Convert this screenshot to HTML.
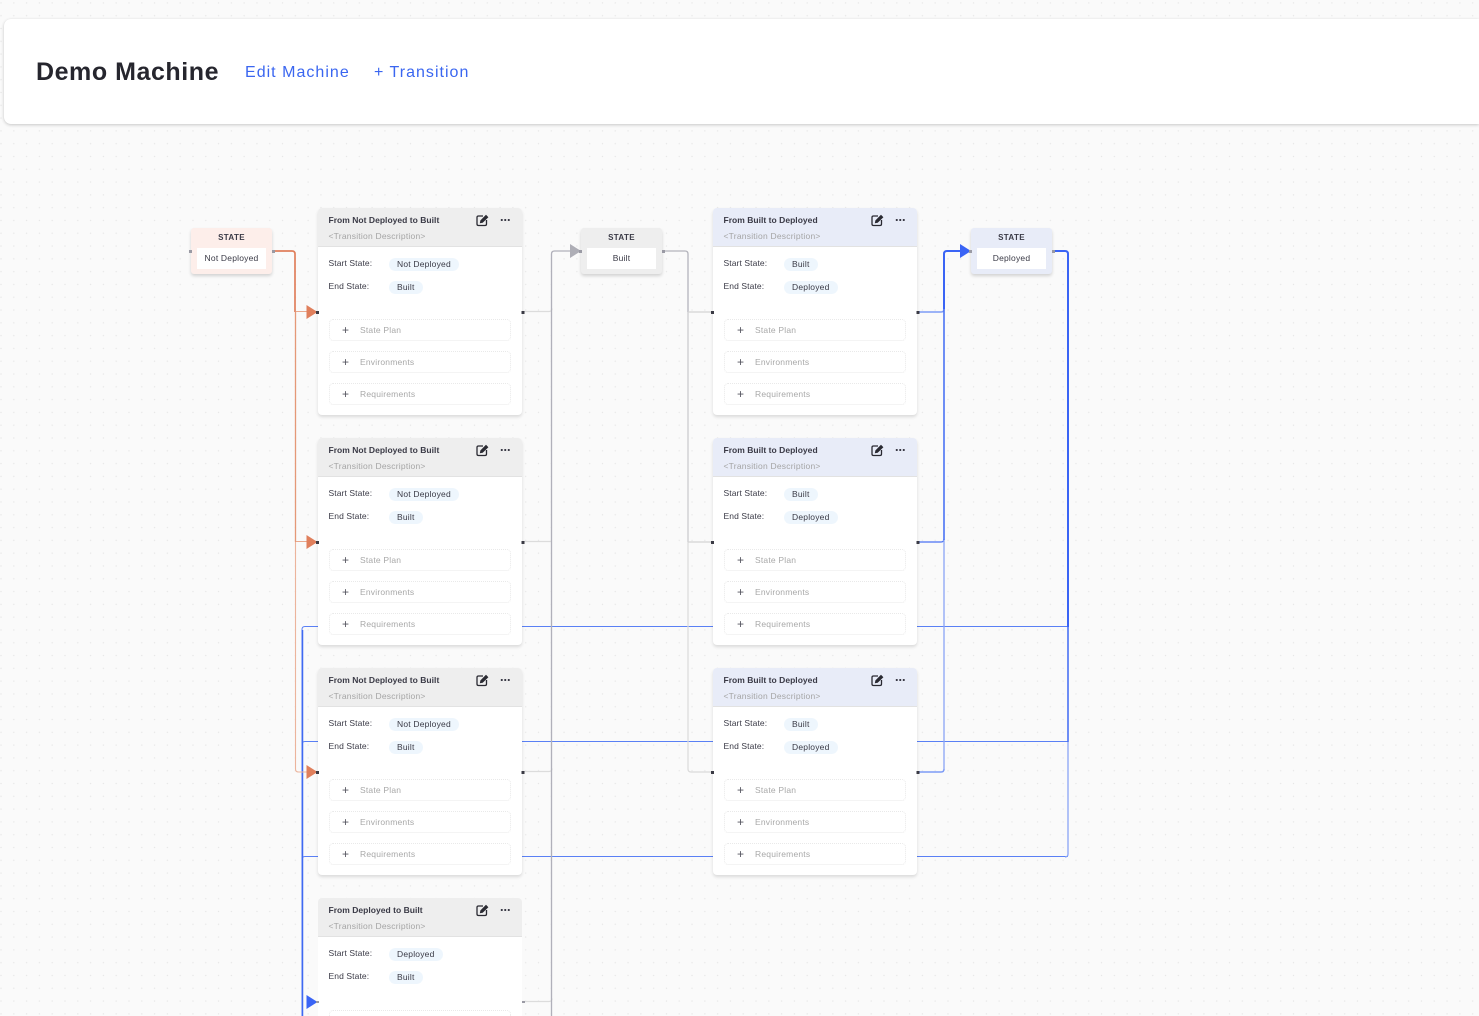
<!DOCTYPE html>
<html><head><meta charset="utf-8"><title>Demo Machine</title>
<style>
*{box-sizing:border-box}
html,body{margin:0;padding:0;width:1479px;height:1016px;overflow:hidden}
body{position:relative;background-color:#fafafa;background-image:radial-gradient(circle at center,#e6e6e6 0.6px,transparent 0.85px);background-size:12.8px 12.8px;background-position:-5.4px -3.5px;font-family:"Liberation Sans",sans-serif;color:#3a3a46}
.top{position:absolute;left:4px;top:19px;width:1475px;height:105px;background:#fff;border-radius:7px 0 0 7px;box-shadow:0 1px 3px rgba(0,0,0,.2),0 0 1px rgba(0,0,0,.06)}
.top b{position:absolute;left:32px;top:38px;font-size:25px;line-height:30px;letter-spacing:.55px;color:#26262e;white-space:nowrap}
.top a{position:absolute;top:44px;font-size:16px;line-height:20px;letter-spacing:1.02px;color:#3a66f0;white-space:nowrap}
svg{position:absolute;left:0;top:0}
.st{position:absolute;top:228px;width:81px;height:46px;border-radius:3px;box-shadow:0 2px 3px rgba(0,0,0,.16);text-align:center}
.st b{display:block;font-size:8px;line-height:10px;margin-top:5px;letter-spacing:.35px;color:#3a3a46}
.st span{position:absolute;left:6px;top:20px;width:69px;height:21px;background:#fff;font-size:8.5px;line-height:21px;letter-spacing:.2px}
.c{position:absolute;width:204px;height:207px;background:#fff;border-radius:4px;box-shadow:0 2px 3px rgba(0,0,0,.13);font-size:8.5px;white-space:nowrap}
.c .h{position:absolute;left:0;top:0;width:204px;height:39px;background:#eeeeee;border-bottom:1px solid #e2e2e2;border-radius:4px 4px 0 0}
.c.b .h{background:#e8ecf8}
.c div,.c span,.c i,.c em{position:absolute;font-style:normal;line-height:12px}
.t{left:10.5px;top:6px;font-weight:bold;letter-spacing:.03px}
.d{left:10.5px;top:22px;color:#a5a5a5;letter-spacing:.22px}
.l1{left:10.5px;top:49px;letter-spacing:.1px}
.l2{left:10.5px;top:72px;letter-spacing:.1px}
.p{left:71px;height:13px;border-radius:7px;background:#eef6fd;padding:0 8px;line-height:13px!important;letter-spacing:.2px}
.p1{top:50px}.p2{top:73px}
.x{left:11px;width:182px;height:22px;border:1px dotted #e9e9e9;border-radius:4px}
.x1{top:111px}.x2{top:143px}.x3{top:175px}
.x i{left:12px;top:4px;font-size:12px;color:#55555f}
.x em{left:30px;top:4px;color:#a8a8a8;letter-spacing:.2px}
.ic{position:absolute;left:158px;top:6px}
.dots{position:absolute;left:182px;top:11px;width:10px;height:2px;background:radial-gradient(circle at center,#3a3a46 1px,transparent 1.1px);background-size:3.5px 2px}
</style></head><body>

<svg width="1479" height="1016" fill="none" stroke-linejoin="round">
<!-- blue long lines -->
<g stroke="#5a80f5" stroke-width="1">
<path d="M1068 626.5H305q-3 0-3 3V1016"/>
<path d="M1068 741.5H305q-3 0-3 3V1016"/>
<path d="M1068 856.5H305q-3 0-3 3V1016"/>
</g>
<path d="M302.5 630V1016" stroke="#3f69f2" stroke-width="1.5"/>
<path d="M1052 251H1065q3 0 3 3V627" stroke="#3a64f5" stroke-width="2"/>
<path d="M1068 627V742" stroke="#4a72f4" stroke-width="1.6"/>
<path d="M1068 742V854q0 3-3 3" stroke="#8aa5f6" stroke-width="1.3"/>
<!-- blue inbound to Deployed -->
<path d="M917 312H941q3 0 3-3" stroke="#7d9bf6" stroke-width="1.5"/>
<path d="M917 542H941q3 0 3-3" stroke="#4a72f4" stroke-width="1.3"/>
<path d="M917 772H941q3 0 3-3" stroke="#7d9bf6" stroke-width="1.5"/>
<path d="M944 309V254q0-3 3-3H962" stroke="#3a64f5" stroke-width="2"/>
<path d="M944 309V540" stroke="#4a72f4" stroke-width="1.6"/>
<path d="M944 540V770" stroke="#8aa5f6" stroke-width="1.3"/>
<!-- orange -->
<path d="M272 251H292q3 0 3 3V312" stroke="#e07f5c" stroke-width="1.7"/>
<path d="M295.500 312V542" stroke="#e59877" stroke-width="1.3"/>
<path d="M295.500 542V769q0 3 3 3H308" stroke="#ecb49c" stroke-width="1.1"/>
<path d="M296 311.500H308M296 541.500H308" stroke="#e9a88d" stroke-width="1"/>
<!-- gray -->
<path d="M522 311.500H549q3 0 3-3M522 541.500H552M522 771.500H549q3 0 3-3M522 1001.500H549q3 0 3-3" stroke="#dcdcdc" stroke-width="1.2"/>
<path d="M551.500 1016V254q0-3 3-3H572" stroke="#b0b0ba" stroke-width="1.3"/>
<path d="M662 251H685q3 0 3 3V312" stroke="#b4b4bc" stroke-width="1.3"/>
<path d="M688 312V542" stroke="#c8c8cc" stroke-width="1.2"/>
<path d="M688 542V769q0 3 3 3H713" stroke="#dadada" stroke-width="1.2"/>
<path d="M688 312H713M688 542H713" stroke="#d4d4d4" stroke-width="1.2"/>
<!-- arrowheads -->
<path d="M306.500 305L317.500 312 306.500 319Z" fill="#e07f5c"/>
<path d="M306.500 535L317.500 542 306.500 549Z" fill="#e07f5c"/>
<path d="M306.500 765L317.500 772 306.500 779Z" fill="#e07f5c"/>
<path d="M306.500 995L317.500 1002 306.500 1009Z" fill="#3a64f5"/>
<path d="M570 244L581 251 570 258Z" fill="#aeaeb6"/>
<path d="M960 244L971 251 960 258Z" fill="#3a64f5"/>
</svg>

<div class="top"><b>Demo Machine</b><a style="left:241px">Edit Machine</a><a style="left:370px">+ Transition</a></div>

<div class="st" style="left:191px;background:#fdeeea"><b>STATE</b><span>Not Deployed</span></div>
<div class="st" style="left:581px;background:#eeeeee"><b>STATE</b><span>Built</span></div>
<div class="st" style="left:971px;background:#e8ecf8"><b>STATE</b><span>Deployed</span></div>

<div class="c" style="left:318px;top:208px"><div class="h"></div><div class="t">From Not Deployed to Built</div><div class="d">&lt;Transition Description&gt;</div>
<svg class="ic" width="13" height="13" viewBox="0 0 13 13" fill="none"><path d="M7 2H2.500Q1 2 1 3.500V10Q1 11.500 2.500 11.500H9Q10.500 11.500 10.500 10V6" stroke="#2a2a32" stroke-width="1.300"/><path d="M3.800 9.200L4.400 6.400 10 .8 12.400 3.200 6.700 8.700Z" fill="#2a2a32"/></svg><span class="dots"></span>
<div class="l1">Start State:</div><span class="p p1">Not Deployed</span><div class="l2">End State:</div><span class="p p2">Built</span>
<div class="x x1"><i>+</i><em>State Plan</em></div><div class="x x2"><i>+</i><em>Environments</em></div><div class="x x3"><i>+</i><em>Requirements</em></div></div>

<div class="c" style="left:318px;top:438px"><div class="h"></div><div class="t">From Not Deployed to Built</div><div class="d">&lt;Transition Description&gt;</div>
<svg class="ic" width="13" height="13" viewBox="0 0 13 13" fill="none"><path d="M7 2H2.500Q1 2 1 3.500V10Q1 11.500 2.500 11.500H9Q10.500 11.500 10.500 10V6" stroke="#2a2a32" stroke-width="1.300"/><path d="M3.800 9.200L4.400 6.400 10 .8 12.400 3.200 6.700 8.700Z" fill="#2a2a32"/></svg><span class="dots"></span>
<div class="l1">Start State:</div><span class="p p1">Not Deployed</span><div class="l2">End State:</div><span class="p p2">Built</span>
<div class="x x1"><i>+</i><em>State Plan</em></div><div class="x x2"><i>+</i><em>Environments</em></div><div class="x x3"><i>+</i><em>Requirements</em></div></div>

<div class="c" style="left:318px;top:668px"><div class="h"></div><div class="t">From Not Deployed to Built</div><div class="d">&lt;Transition Description&gt;</div>
<svg class="ic" width="13" height="13" viewBox="0 0 13 13" fill="none"><path d="M7 2H2.500Q1 2 1 3.500V10Q1 11.500 2.500 11.500H9Q10.500 11.500 10.500 10V6" stroke="#2a2a32" stroke-width="1.300"/><path d="M3.800 9.200L4.400 6.400 10 .8 12.400 3.200 6.700 8.700Z" fill="#2a2a32"/></svg><span class="dots"></span>
<div class="l1">Start State:</div><span class="p p1">Not Deployed</span><div class="l2">End State:</div><span class="p p2">Built</span>
<div class="x x1"><i>+</i><em>State Plan</em></div><div class="x x2"><i>+</i><em>Environments</em></div><div class="x x3"><i>+</i><em>Requirements</em></div></div>

<div class="c" style="left:318px;top:898px;height:118px;box-shadow:none;border-radius:4px 4px 0 0"><div class="h"></div><div class="t">From Deployed to Built</div><div class="d">&lt;Transition Description&gt;</div>
<svg class="ic" width="13" height="13" viewBox="0 0 13 13" fill="none"><path d="M7 2H2.500Q1 2 1 3.500V10Q1 11.500 2.500 11.500H9Q10.500 11.500 10.500 10V6" stroke="#2a2a32" stroke-width="1.300"/><path d="M3.800 9.200L4.400 6.400 10 .8 12.400 3.200 6.700 8.700Z" fill="#2a2a32"/></svg><span class="dots"></span>
<div class="l1">Start State:</div><span class="p p1">Deployed</span><div class="l2">End State:</div><span class="p p2">Built</span>
<div class="x" style="top:112px;height:6px;border-bottom:0;border-radius:4px 4px 0 0"></div></div>

<div class="c b" style="left:713px;top:208px"><div class="h"></div><div class="t">From Built to Deployed</div><div class="d">&lt;Transition Description&gt;</div>
<svg class="ic" width="13" height="13" viewBox="0 0 13 13" fill="none"><path d="M7 2H2.500Q1 2 1 3.500V10Q1 11.500 2.500 11.500H9Q10.500 11.500 10.500 10V6" stroke="#2a2a32" stroke-width="1.300"/><path d="M3.800 9.200L4.400 6.400 10 .8 12.400 3.200 6.700 8.700Z" fill="#2a2a32"/></svg><span class="dots"></span>
<div class="l1">Start State:</div><span class="p p1">Built</span><div class="l2">End State:</div><span class="p p2">Deployed</span>
<div class="x x1"><i>+</i><em>State Plan</em></div><div class="x x2"><i>+</i><em>Environments</em></div><div class="x x3"><i>+</i><em>Requirements</em></div></div>

<div class="c b" style="left:713px;top:438px"><div class="h"></div><div class="t">From Built to Deployed</div><div class="d">&lt;Transition Description&gt;</div>
<svg class="ic" width="13" height="13" viewBox="0 0 13 13" fill="none"><path d="M7 2H2.500Q1 2 1 3.500V10Q1 11.500 2.500 11.500H9Q10.500 11.500 10.500 10V6" stroke="#2a2a32" stroke-width="1.300"/><path d="M3.800 9.200L4.400 6.400 10 .8 12.400 3.200 6.700 8.700Z" fill="#2a2a32"/></svg><span class="dots"></span>
<div class="l1">Start State:</div><span class="p p1">Built</span><div class="l2">End State:</div><span class="p p2">Deployed</span>
<div class="x x1"><i>+</i><em>State Plan</em></div><div class="x x2"><i>+</i><em>Environments</em></div><div class="x x3"><i>+</i><em>Requirements</em></div></div>

<div class="c b" style="left:713px;top:668px"><div class="h"></div><div class="t">From Built to Deployed</div><div class="d">&lt;Transition Description&gt;</div>
<svg class="ic" width="13" height="13" viewBox="0 0 13 13" fill="none"><path d="M7 2H2.500Q1 2 1 3.500V10Q1 11.500 2.500 11.500H9Q10.500 11.500 10.500 10V6" stroke="#2a2a32" stroke-width="1.300"/><path d="M3.800 9.200L4.400 6.400 10 .8 12.400 3.200 6.700 8.700Z" fill="#2a2a32"/></svg><span class="dots"></span>
<div class="l1">Start State:</div><span class="p p1">Built</span><div class="l2">End State:</div><span class="p p2">Deployed</span>
<div class="x x1"><i>+</i><em>State Plan</em></div><div class="x x2"><i>+</i><em>Environments</em></div><div class="x x3"><i>+</i><em>Requirements</em></div></div>

<svg width="1479" height="1016" style="pointer-events:none">
<g fill="#3a3a44">
<rect x="316" y="311" width="3" height="3"/><rect x="521.500" y="311" width="3" height="3"/>
<rect x="316" y="541" width="3" height="3"/><rect x="521.500" y="541" width="3" height="3"/>
<rect x="316" y="771" width="3" height="3"/><rect x="521.500" y="771" width="3" height="3"/>
<rect x="711" y="311" width="3" height="3"/><rect x="916.500" y="311" width="3" height="3"/>
<rect x="711" y="541" width="3" height="3"/><rect x="916.500" y="541" width="3" height="3"/>
<rect x="711" y="771" width="3" height="3"/><rect x="916.500" y="771" width="3" height="3"/>
</g>
<g fill="#9a9aa4">
<rect x="316" y="1001" width="3" height="2"/><rect x="522" y="1001" width="3" height="2"/>
<rect x="189" y="250" width="3" height="3"/><rect x="272" y="250" width="3" height="3"/>
<rect x="579" y="250" width="3" height="3"/><rect x="662" y="250" width="3" height="3"/>
<rect x="969" y="250" width="3" height="3"/><rect x="1052" y="250" width="3" height="3"/>
</g>
</svg>
</body></html>
